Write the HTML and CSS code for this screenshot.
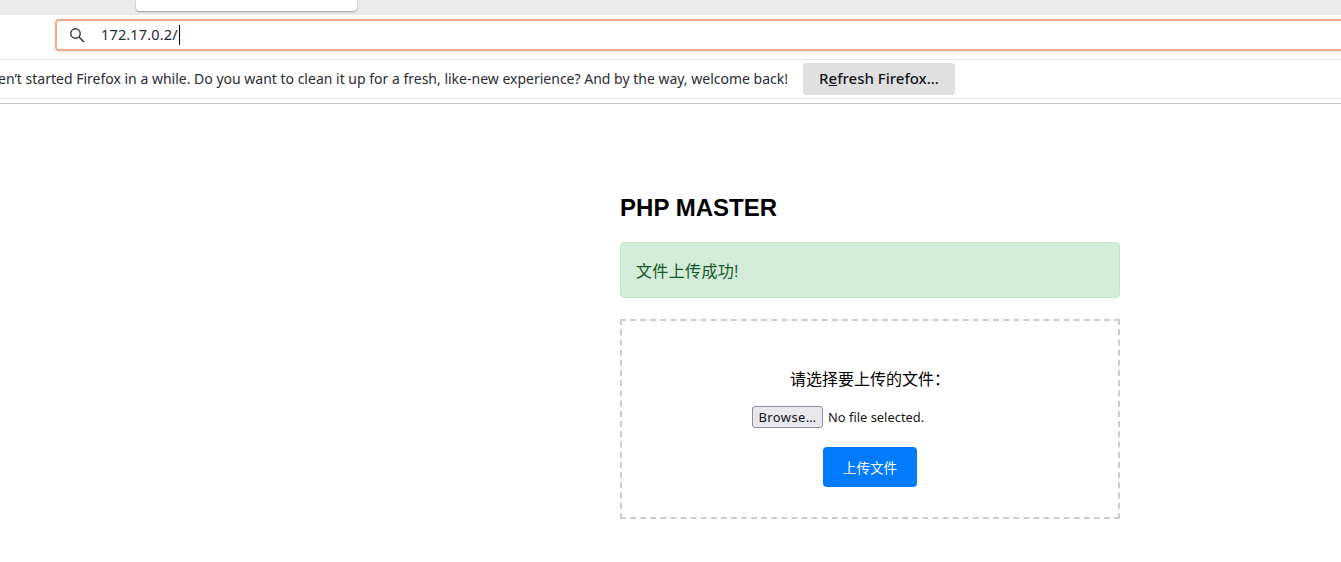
FILE: index.html
```html
<!DOCTYPE html>
<html lang="zh">
<head>
<meta charset="utf-8">
<title>PHP MASTER</title>
<link rel="stylesheet" href="styles.css">
</head>
<body>
<header class="chrome">
  <div class="tabstrip"><div class="tab-popup"></div></div>
  <div class="toolbar">
    <div class="urlbar">
      <svg class="search-icon" width="16" height="16" viewBox="0 0 16 16" aria-hidden="true"><circle cx="6.5" cy="6.5" r="4.7" fill="none" stroke="#333" stroke-width="1.4"/><path d="M10 10l5 5" stroke="#333" stroke-width="1.5" fill="none"/></svg>
      <span class="url">172.17.0.2/</span><span class="caret"></span>
    </div>
  </div>
  <div class="notice">
    <span class="notice-text">It looks like you haven’t started Firefox in a while. Do you want to clean it up for a fresh, like-new experience? And by the way, welcome back!</span>
    <button class="notice-btn" type="button">R<u>e</u>fresh Firefox…</button>
  </div>
</header>
<main class="page">
  <div class="container">
    <h1 class="title">PHP MASTER</h1>
    <div class="alert">文件上传成功!</div>
    <form class="upload">
      <label class="upload-label" for="file">请选择要上传的文件：</label>
      <div class="file-row">
        <button class="browse" type="button" id="file">Browse…</button>
        <span class="file-name">No file selected.</span>
      </div>
      <button class="submit" type="button">上传文件</button>
    </form>
  </div>
</main>
</body>
</html>
```
FILE: styles.css
```css
* { box-sizing: border-box; }
html, body { margin: 0; height: 562px; overflow: hidden; background: #fff; }
body { font-family: "Liberation Sans", "Noto Sans CJK SC", sans-serif; color: #000; }

.chrome { font-family: "Noto Sans", "Noto Sans CJK SC", sans-serif; }
.tabstrip { height: 15px; background: #ebebeb; padding-left: 136px; }
.tab-popup { width: 221px; height: 11px; background: #fff; border-radius: 0 0 4px 4px; box-shadow: 0 1px 2px rgba(0,0,0,.35); }

.toolbar { height: 45px; padding: 4px 0 0 55px; border-bottom: 1px solid #e8e8e8; overflow: hidden; }
.urlbar { width: 1320px; height: 32px; display: flex; align-items: center; padding-left: 12px; background: #fff; border: 2px solid #f5a88a; border-radius: 4px; box-shadow: 0 1px 3px rgba(0,0,0,.12); }
.search-icon { flex: none; margin-top: -1px; }
.url { margin-left: 16px; margin-top: -2px; font-size: 14.5px; letter-spacing: .15px; color: #1c2a3a; }
.caret { width: 1px; height: 20px; margin-left: 1px; margin-top: -1px; background: #000; }

.notice { height: 39px; display: flex; justify-content: flex-end; align-items: center; gap: 15px; padding-right: 386px; border-bottom: 1px solid #e4e4e4; overflow: hidden; }
.notice-text { flex: none; white-space: nowrap; margin-top: -2px; font-size: 14px; color: #2b2b33; }
.notice-btn { flex: none; width: 152px; height: 32px; padding: 0 0 2px; border: 0; border-radius: 3px; background: #e0e0e0; font: 500 15px "Noto Sans", sans-serif; color: #15141a; }

.page { margin-top: 4px; border-top: 1px solid #c8c8c8; padding: 89px 0 0 620px; }
.container { width: 500px; }
.title { margin: 0 0 20px; font-size: 24px; line-height: 29px; font-weight: 700; letter-spacing: .03px; color: #000; }
.alert { height: 56px; padding: 0 15px; display: flex; align-items: center; font-size: 16px; letter-spacing: .35px; color: #155724; background: #d4edda; border: 1px solid #c3e6cb; border-radius: 4px; }

.upload { margin-top: 21px; height: 200px; border: 2px dashed #ccc; display: flex; flex-direction: column; align-items: center; padding-top: 48px; }
.upload-label { font-size: 16px; line-height: 22px; }
.file-row { margin-top: 15px; width: 236px; display: flex; align-items: center; gap: 5px; font-family: "Noto Sans", sans-serif; font-size: 12.9px; color: #15141a; }
.browse { width: 71px; height: 22px; padding: 0; border: 1px solid #8f8f9d; border-radius: 3px; background: #e9e9ed; font: 13px "Noto Sans", sans-serif; letter-spacing: .4px; color: #15141a; }
.submit { margin-top: 19px; width: 94px; height: 40px; border: 0; border-radius: 4px; background: #007bff; color: #fff; font: 13.6px "Liberation Sans", "Noto Sans CJK SC", sans-serif; }
```
